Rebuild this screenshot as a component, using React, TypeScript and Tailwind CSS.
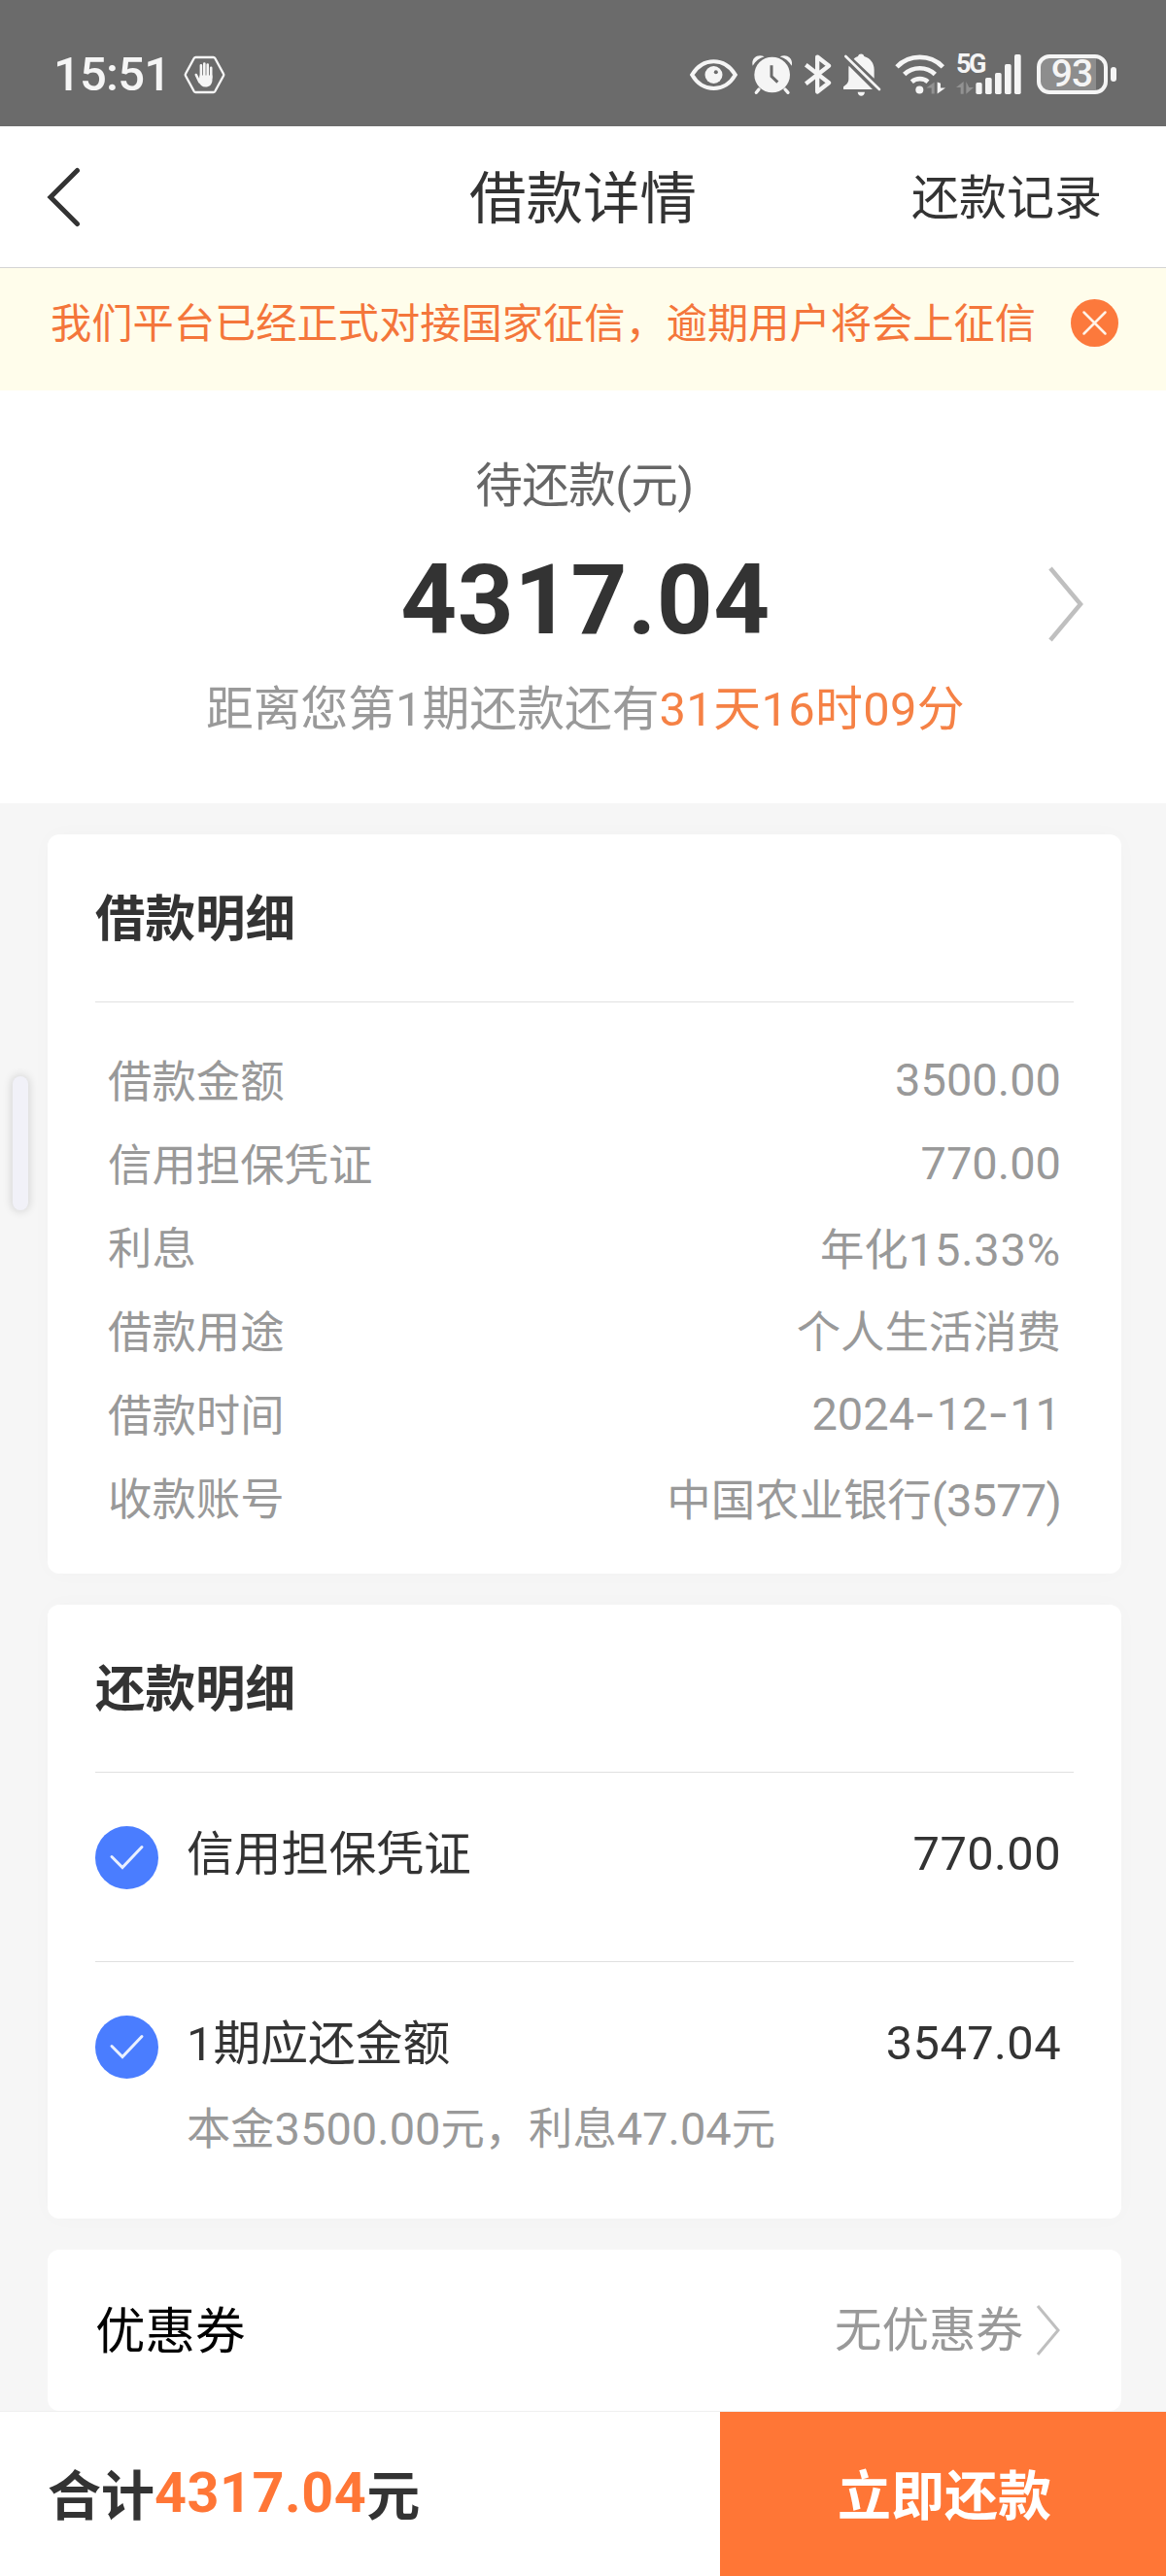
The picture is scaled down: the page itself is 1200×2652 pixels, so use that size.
import * as React from 'react';

interface LoanRow {
  label: string;
  value: React.ReactNode;
  numeric?: boolean;
}

interface RepayItemProps {
  title: string;
  amount: string;
  note?: React.ReactNode;
}

// Latin digits run a little larger than the Chinese text next to them
function Num({ children }: { children: React.ReactNode }) {
  return <span className="text-[47px]">{children}</span>;
}

function Dash() {
  return <span className="font-['Inter'] tracking-[1px]">-</span>;
}

const loanRows: LoanRow[] = [
  { label: '借款金额', value: <Num>3500.00</Num>, numeric: true },
  { label: '信用担保凭证', value: <Num>770.00</Num>, numeric: true },
  {
    label: '利息',
    value: <>年化<span className="text-[47px] tracking-[0.8px]">15.33%</span></>,
  },
  { label: '借款用途', value: '个人生活消费' },
  { label: '借款时间', value: <Num>2024<Dash />12<Dash />11</Num>, numeric: true },
  {
    label: '收款账号',
    value: <>中国农业银行<span className="text-[47px] tracking-[-0.8px]">(3577)</span></>,
  },
];

function HandIcon() {
  return (
    <svg viewBox="0 0 43 40" className="h-[40px] w-[43px]" fill="none">
      <path
        d="M12.500 2h18a2 2 0 0 1 1.800 1l8.700 16a2 2 0 0 1 0 2l-8.700 16a2 2 0 0 1-1.800 1h-18a2 2 0 0 1-1.800-1L2 21a2 2 0 0 1 0-2l8.700-16a2 2 0 0 1 1.800-1z"
        stroke="#f5f5f5"
        strokeWidth="2.400"
      />
      <g stroke="#f5f5f5" strokeWidth="2.600" strokeLinecap="round">
        <path d="M17.900 22V10.300M21.300 22V8.500M24.700 22V9.500M28.200 23V12.800" />
        <path d="M12.800 20l3.600 7.500" />
      </g>
      <path d="M16.600 20.500h12.900v4.500c0 5-3 7.500-7 7.500-3.600 0-5.800-2-7-6z" fill="#f5f5f5" />
    </svg>
  );
}

function EyeIcon() {
  return (
    <svg viewBox="58 88 152 102" className="h-[34px] w-[51px]" fill="none">
      <path
        d="M67 139c16-26 38-41 67-41s51 15 67 41c-16 27-38 42-67 42s-51-15-67-42z"
        stroke="#f5f5f5"
        strokeWidth="12"
      />
      <circle cx="134" cy="139" r="27" fill="#f5f5f5" />
      <circle cx="141" cy="131" r="6" fill="#6b6b6b" />
    </svg>
  );
}

function AlarmIcon() {
  return (
    <svg viewBox="252 76 123 126" className="h-[42px] w-[41px]" fill="none">
      <circle cx="314" cy="139" r="55" fill="#f5f5f5" />
      <path
        d="M273 184l-8 10M354 184l9 10"
        stroke="#f5f5f5"
        strokeWidth="10"
        strokeLinecap="round"
      />
      <path d="M254 111c-6-22 14-38 36-28-16 5-28 14-36 28zM374 111c6-22-14-38-36-28 16 5 28 14 36 28z" fill="#f5f5f5" />
      <path d="M312 110v34l19 18" stroke="#6b6b6b" strokeWidth="9" />
    </svg>
  );
}

function BluetoothIcon() {
  return (
    <svg viewBox="411 75 88 129" className="h-[43px] w-[29px]" fill="none">
      <path
        d="M418 110l72 56-36 28V85l36 28-72 56"
        stroke="#f5f5f5"
        strokeWidth="13"
        strokeLinejoin="round"
      />
    </svg>
  );
}

function BellOffIcon() {
  return (
    <svg viewBox="531 72 120 138" className="h-[46px] w-[40px]" fill="none">
      <path
        d="M551 113l73 73h-90v-8c12-9 16-13 16-25v-30c0-4 0-7 1-10zM566 92c4-4 8-6 13-8 2-10 17-10 19 0 20 6 31 22 31 41v27z"
        fill="#f5f5f5"
      />
      <path d="M578 194h22c-1 8-5 12-11 12s-10-4-11-12z" fill="#f5f5f5" />
      <path d="M541 84l104 102" stroke="#f5f5f5" strokeWidth="8" strokeLinecap="round" />
    </svg>
  );
}

function WifiIcon() {
  return (
    <svg viewBox="0 74 162 128" className="h-[43px] w-[54px]" fill="none">
      <g stroke="#f5f5f5" strokeWidth="14">
        <path d="M9 115c38-40 104-40 142 0" />
        <path d="M32 138c26-25 70-25 95 0" />
        <path d="M55 161c14-12 36-12 50 0" />
      </g>
      <circle cx="79" cy="186" r="12" fill="#f5f5f5" />
      <path d="M125 162v36h-9v-18h-16z" fill="#929292" />
      <path d="M134 198v-36l10 4v14h15z" fill="#f5f5f5" />
    </svg>
  );
}

function SignalIcon() {
  return (
    <div className="relative h-[41px] w-[68px]">
      <svg viewBox="192 78 204 123" className="h-[41px] w-[68px]">
        <g fill="#f5f5f5">
          <rect x="253" y="165" width="19" height="36" rx="5" />
          <rect x="282" y="150" width="20" height="51" rx="5" />
          <rect x="312" y="135" width="20" height="66" rx="5" />
          <rect x="342" y="108" width="20" height="93" rx="5" />
          <rect x="372" y="78" width="20" height="123" rx="5" />
        </g>
        <path d="M215 162v38h-9v-20h-14zM223 200v-38l9 18h14z" fill="#929292" />
      </svg>
      <span className="absolute top-0 left-0 text-[27px] leading-[21px] font-bold tracking-[-2.5px]">
        5G
      </span>
    </div>
  );
}

function Battery() {
  return (
    <div className="flex items-center gap-[3px]">
      <div className="flex h-[41px] w-[73px] items-center justify-center rounded-[13px] border-4 border-[#f5f5f5] bg-linear-to-r from-[#8d8d8d] from-88% to-[#6b6b6b] to-88% pr-[1px] text-[39px] leading-none font-medium tracking-[-1px]">
        93
      </div>
      <div className="h-[15px] w-[6px] rounded-[3px] bg-[#f5f5f5]" />
    </div>
  );
}

function StatusBar() {
  return (
    <div className="flex h-[130px] items-center justify-between bg-[#6b6b6b] pt-[23px] pr-[51px] pl-[55px] text-[#f5f5f5]">
      <div className="flex items-center">
        <span className="w-[134px] text-[49px] leading-[52px] font-medium tracking-[-0.8px]">15:51</span>
        <HandIcon />
      </div>
      <div className="flex items-center">
        <EyeIcon />
        <div className="ml-[14px]"><AlarmIcon /></div>
        <div className="ml-[12px]"><BluetoothIcon /></div>
        <div className="ml-[11px]"><BellOffIcon /></div>
        <div className="ml-[13px]"><WifiIcon /></div>
        <div className="ml-[10px]"><SignalIcon /></div>
        <div className="ml-[15px]"><Battery /></div>
      </div>
    </div>
  );
}

function Header() {
  return (
    <header className="grid h-[146px] grid-cols-[1fr_auto_1fr] items-center border-b border-[#d4d4d4] bg-white px-[48px] text-[#333]">
      <svg viewBox="0 0 36 62" className="h-[62px] w-[36px]" fill="none">
        <path d="M31.500 3.500L4 31l27.500 27.500" stroke="#333" strokeWidth="5" strokeLinecap="round" />
      </svg>
      <h1 className="pt-[5px] text-[58.500px] leading-none">借款详情</h1>
      <button className="justify-self-end pt-[3px] pr-[18px] text-[49px] leading-none">还款记录</button>
    </header>
  );
}

function Notice() {
  return (
    <div className="flex h-[126px] items-start justify-between bg-[#fffdeb] pt-[32px] pr-[49px] pl-[52px]">
      <p className="pt-[1px] text-[42.250px] leading-[49px] whitespace-nowrap text-[#f4763b]">
        我们平台已经正式对接国家征信，逾期用户将会上征信
      </p>
      <svg viewBox="0 0 49 49" className="size-[49px]" fill="none">
        <circle cx="24.500" cy="24.500" r="24.500" fill="#fc793c" />
        <path d="M13.500 13.500l22 22M35.500 13.500l-22 22" stroke="#fff3e8" strokeWidth="2.500" strokeLinecap="round" />
      </svg>
    </div>
  );
}

function Summary() {
  return (
    <section className="relative flex h-[425px] flex-col items-center bg-white pt-[69px]">
      <p className="pl-[3px] text-[48.500px] leading-[60px] tracking-[-0.5px] text-[#666]">待还款(元)</p>
      <p className="mt-[37px] pl-[5px] text-[101px] leading-[100px] font-bold tracking-[0.5px] text-[#333]">4317.04</p>
      <p className="mt-[33px] pl-[5px] text-[48.800px] leading-[60px] text-[#999]">
        距离您第1期还款还有
        <span className="tracking-[0.4px] text-[#f58145]">31天16时09分</span>
      </p>
      <svg viewBox="0 0 38 80" className="absolute top-[180px] right-[84px] h-[80px] w-[38px]" fill="none">
        <path d="M3 3l31 37L3 77" stroke="#bfbfbf" strokeWidth="4.500" />
      </svg>
    </section>
  );
}

function Card({ title, children }: { title: string; children: React.ReactNode }) {
  return (
    <section className="rounded-[12px] bg-white px-[49px] shadow-[0_0_24px_rgba(0,0,0,0.020)]">
      <h2 className="flex h-[173px] items-center border-b border-[#e0e0e0] pt-[3px] text-[51.500px] leading-none font-bold text-[#333]">
        {title}
      </h2>
      {children}
    </section>
  );
}

function RepayItem({ title, amount, note }: RepayItemProps) {
  return (
    <div className="flex pt-[55px] pr-[13px]">
      <svg viewBox="0 0 65 65" className="size-[65px] shrink-0" fill="none">
        <circle cx="32.500" cy="32.500" r="32.500" fill="#4a7dff" />
        <path d="M17 31.500l11 11 20-21" stroke="#e9f0ff" strokeWidth="3" strokeLinecap="round" />
      </svg>
      <div className="ml-[29px] flex-1">
        <div className="flex justify-between text-[48.800px] leading-[60px] text-[#333]">
          <span>{title}</span>
          <span className="-mt-[1px] tracking-[0.4px]">{amount}</span>
        </div>
        {note && <p className="mt-[27px] text-[45.300px] leading-[60px] text-[#999]">{note}</p>}
      </div>
    </div>
  );
}

export default function App() {
  return (
    <div className="relative flex h-[2652px] w-[1200px] flex-col overflow-hidden bg-[#f6f6f6] font-['Roboto','Noto_Sans_CJK_SC',sans-serif]">
      <StatusBar />
      <Header />
      <Notice />
      <Summary />

      <main className="flex flex-1 flex-col gap-[32px] pt-[32px] pr-[46px] pl-[49px]">
        <div className="h-[761px]">
          <Card title="借款明细">
            <div className="h-[588px] pt-[40px] pr-[13px] pl-[13px]">
              {loanRows.map((row) => (
                <div
                  key={row.label}
                  className="flex h-[86px] items-center justify-between text-[45.400px] leading-[60px] text-[#999]"
                >
                  <span>{row.label}</span>
                  <span className={row.numeric ? 'pb-[6px]' : ''}>{row.value}</span>
                </div>
              ))}
            </div>
          </Card>
        </div>

        <Card title="还款明细">
          <div className="h-[195px] border-b border-[#e0e0e0]">
            <RepayItem title="信用担保凭证" amount="770.00" />
          </div>
          <div className="h-[264px]">
            <RepayItem
              title="1期应还金额"
              amount="3547.04"
              note={<>本金<Num>3500.00</Num>元，利息<Num>47.04</Num>元</>}
            />
          </div>
        </Card>

        <section className="flex h-[166px] items-center justify-between rounded-[12px] bg-white pr-[62px] pl-[49px]">
          <span className="pt-[3px] text-[51.500px] leading-none text-black">优惠券</span>
          <div className="flex items-center gap-[13px]">
            <span className="pt-[2px] text-[48.500px] leading-none text-[#999]">无优惠券</span>
            <svg viewBox="0 0 26 54" className="h-[54px] w-[26px]" fill="none">
              <path d="M2 2l21 25L2 52" stroke="#bfbfbf" strokeWidth="3" />
            </svg>
          </div>
        </section>
      </main>

      <footer className="flex h-[170px] shrink-0 border-t border-[#f0f0f0] bg-white">
        <div className="flex flex-1 items-center pl-[49px] text-[55px] leading-none font-bold text-[#333]">
          <span className="pt-[5px]">合计</span>
          <span className="pb-[1px] text-[57.500px] tracking-[0.5px] text-[#ff7636]">4317.04</span>
          <span className="pt-[5px]">元</span>
        </div>
        <button className="w-[459px] bg-[#ff7636] pt-[5px] pl-[3px] text-[55px] leading-none font-bold text-white">
          立即还款
        </button>
      </footer>

      {/* Edge gesture handle floating over the page */}
      <div className="absolute top-[1108px] left-[13px] h-[138px] w-[16px] rounded-full bg-[#f1f1f8] shadow-[0_0_8px_2px_rgba(0,0,0,0.120)]" />
    </div>
  );
}
